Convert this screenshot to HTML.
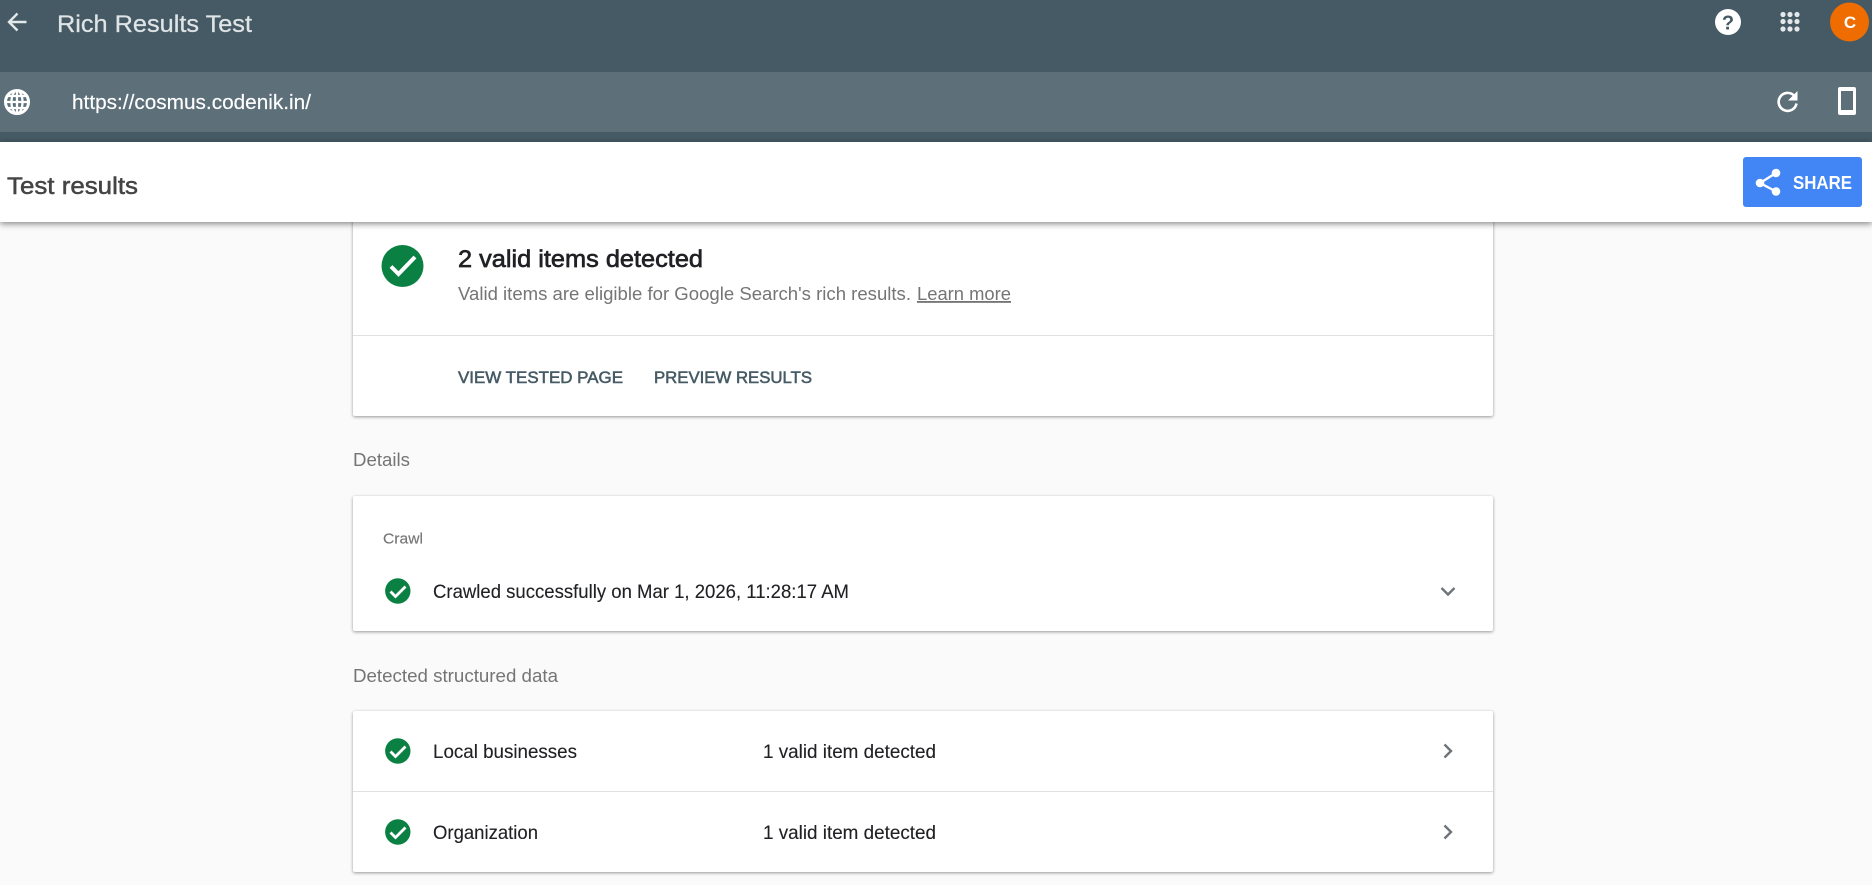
<!DOCTYPE html>
<html lang="en">
<head>
<meta charset="utf-8">
<title>Rich Results Test</title>
<style>
html,body{margin:0;padding:0;width:1872px;height:885px;overflow:hidden;background:#fafafa;font-family:"Liberation Sans",sans-serif}
.abs{position:absolute}
.top{left:0;top:0;width:1872px;height:142px;background:#455a64}
.url{left:0;top:72px;width:1872px;height:60px;background:#5d6f79}
.bar{left:0;top:142px;width:1872px;height:80px;background:#fff;box-shadow:0 2px 6px rgba(0,0,0,.45);z-index:3}
.btn{left:1743px;top:157px;width:119px;height:50px;background:#4285f4;border-radius:3px;z-index:4}
.card{left:353px;width:1140px;background:#fff;border-radius:2px;box-shadow:0 1px 3px rgba(0,0,0,.4)}
.hr{left:353px;width:1140px;height:1px;background:#e0e0e0}
svg{position:absolute;left:0;top:0;z-index:5}
</style>
</head>
<body>
<div class="abs top"></div>
<div class="abs url"></div>
<div class="abs bar"></div>
<div class="abs btn"></div>
<div class="abs card" style="top:200px;height:216px"></div>
<div class="abs hr" style="top:335px"></div>
<div class="abs card" style="top:496px;height:135px"></div>
<div class="abs card" style="top:711px;height:161px"></div>
<div class="abs hr" style="top:791px"></div>
<svg width="1872" height="885" viewBox="0 0 1872 885" font-family="'Liberation Sans',sans-serif">
  <!-- back arrow -->
  <path d="M26.500 22H10M17.500 13.500L9 22l8.500 8.500" fill="none" stroke="#e3e8ea" stroke-width="2.400"/>
  <text x="57" y="32" font-size="24" fill="#dfe4e6" stroke="#dfe4e6" stroke-width=".25" textLength="195" lengthAdjust="spacingAndGlyphs">Rich Results Test</text>
  <!-- globe -->
  <circle cx="17" cy="102" r="11.500" fill="none" stroke="#fff" stroke-width="3"/>
  <path d="M5 102h24M6.500 96h21M6.500 108h21M17 90.500v23" stroke="#fff" stroke-width="2.300"/>
  <ellipse cx="17" cy="102" rx="5.500" ry="11.500" fill="none" stroke="#fff" stroke-width="2.300"/>
  <text x="72" y="109" font-size="20" fill="#fff" stroke="#fff" stroke-width=".15" textLength="239" lengthAdjust="spacingAndGlyphs">https://cosmus.codenik.in/</text>
  <text x="7" y="194" font-size="24" fill="#444" stroke="#444" stroke-width=".5" textLength="131" lengthAdjust="spacingAndGlyphs">Test results</text>

  <!-- help -->
  <circle cx="1728" cy="22" r="13" fill="#fff"/>
  <text x="1728" y="29.500" font-size="20" font-weight="bold" text-anchor="middle" fill="#455a64">?</text>
  <!-- apps -->
  <g fill="#e3e8ea">
    <circle cx="1783" cy="14.500" r="2.600"/><circle cx="1790" cy="14.500" r="2.600"/><circle cx="1797" cy="14.500" r="2.600"/>
    <circle cx="1783" cy="21.500" r="2.600"/><circle cx="1790" cy="21.500" r="2.600"/><circle cx="1797" cy="21.500" r="2.600"/>
    <circle cx="1783" cy="29" r="2.600"/><circle cx="1790" cy="29" r="2.600"/><circle cx="1797" cy="29" r="2.600"/>
  </g>
  <!-- avatar -->
  <circle cx="1849.500" cy="22" r="19.500" fill="#ef6c00"/>
  <text x="1850" y="28" font-size="17" font-weight="bold" text-anchor="middle" fill="#fff">C</text>
  <!-- reload -->
  <path d="M1794 95.500A9 9 0 1 0 1796.500 103.500" fill="none" stroke="#fff" stroke-width="2.600"/>
  <path d="M1797.500 91v9.500h-9.500z" fill="#fff"/>
  <!-- phone -->
  <rect x="1838" y="87" width="18" height="28" rx="2" fill="#fff"/>
  <rect x="1841" y="91" width="12" height="19" fill="#5d6f79"/>
  <!-- share -->
  <path d="M1776 173l-16 10 16 8.500" fill="none" stroke="#fff" stroke-width="2.400"/>
  <circle cx="1776" cy="173" r="4.300" fill="#fff"/>
  <circle cx="1760" cy="183" r="4.300" fill="#fff"/>
  <circle cx="1776" cy="191.500" r="4.300" fill="#fff"/>
  <text x="1793" y="189" font-size="18" font-weight="bold" fill="#fff" textLength="59" lengthAdjust="spacingAndGlyphs">SHARE</text>

  <!-- card 1 -->
  <circle cx="402.500" cy="266" r="21" fill="#0b8043"/>
  <path d="M391 266.500l7.500 7.500 16.500-17" fill="none" stroke="#fff" stroke-width="4"/>
  <text x="458" y="267" font-size="24" fill="#202124" stroke="#202124" stroke-width=".65" textLength="245" lengthAdjust="spacingAndGlyphs">2 valid items detected</text>
  <text x="458" y="300" font-size="18.500" fill="#757575" textLength="453" lengthAdjust="spacingAndGlyphs">Valid items are eligible for Google Search's rich results.</text>
  <text x="917" y="300" font-size="18.500" fill="#757575" text-decoration="underline" textLength="94" lengthAdjust="spacingAndGlyphs">Learn more</text>
  <text x="458" y="383" font-size="17" fill="#455a64" stroke="#455a64" stroke-width=".55" textLength="165" lengthAdjust="spacingAndGlyphs">VIEW TESTED PAGE</text>
  <text x="654" y="383" font-size="17" fill="#455a64" stroke="#455a64" stroke-width=".55" textLength="158" lengthAdjust="spacingAndGlyphs">PREVIEW RESULTS</text>

  <text x="353" y="466" font-size="18" fill="#757575" textLength="57" lengthAdjust="spacingAndGlyphs">Details</text>

  <!-- card 2 -->
  <text x="383" y="543.500" font-size="15" fill="#757575" stroke="#757575" stroke-width=".15" textLength="40" lengthAdjust="spacingAndGlyphs">Crawl</text>
  <circle cx="397.800" cy="591" r="12.700" fill="#0b8043"/>
  <path d="M390.500 591.500l5 5 10-10" fill="none" stroke="#fff" stroke-width="2.800"/>
  <text x="433" y="598" font-size="19.500" fill="#202124" stroke="#202124" stroke-width=".12" textLength="416" lengthAdjust="spacingAndGlyphs">Crawled successfully on Mar 1, 2026, 11:28:17 AM</text>
  <path d="M1441.500 588l6.500 6.500 6.500-6.500" fill="none" stroke="#6f7478" stroke-width="2.400"/>

  <text x="353" y="682" font-size="18.500" fill="#757575" textLength="205" lengthAdjust="spacingAndGlyphs">Detected structured data</text>

  <!-- card 3 -->
  <circle cx="397.800" cy="751" r="12.700" fill="#0b8043"/>
  <path d="M390.500 751.500l5 5 10-10" fill="none" stroke="#fff" stroke-width="2.800"/>
  <text x="433" y="758" font-size="19.500" fill="#202124" stroke="#202124" stroke-width=".12" textLength="144" lengthAdjust="spacingAndGlyphs">Local businesses</text>
  <text x="763" y="758" font-size="19.500" fill="#202124" stroke="#202124" stroke-width=".12" textLength="173" lengthAdjust="spacingAndGlyphs">1 valid item detected</text>
  <path d="M1444.500 744.500l6.500 6.500-6.500 6.500" fill="none" stroke="#6f7478" stroke-width="2.400"/>

  <circle cx="397.800" cy="832" r="12.700" fill="#0b8043"/>
  <path d="M390.500 832.500l5 5 10-10" fill="none" stroke="#fff" stroke-width="2.800"/>
  <text x="433" y="839" font-size="19.500" fill="#202124" stroke="#202124" stroke-width=".12" textLength="105" lengthAdjust="spacingAndGlyphs">Organization</text>
  <text x="763" y="839" font-size="19.500" fill="#202124" stroke="#202124" stroke-width=".12" textLength="173" lengthAdjust="spacingAndGlyphs">1 valid item detected</text>
  <path d="M1444.500 825.500l6.500 6.500-6.500 6.500" fill="none" stroke="#6f7478" stroke-width="2.400"/>
</svg>
</body>
</html>
